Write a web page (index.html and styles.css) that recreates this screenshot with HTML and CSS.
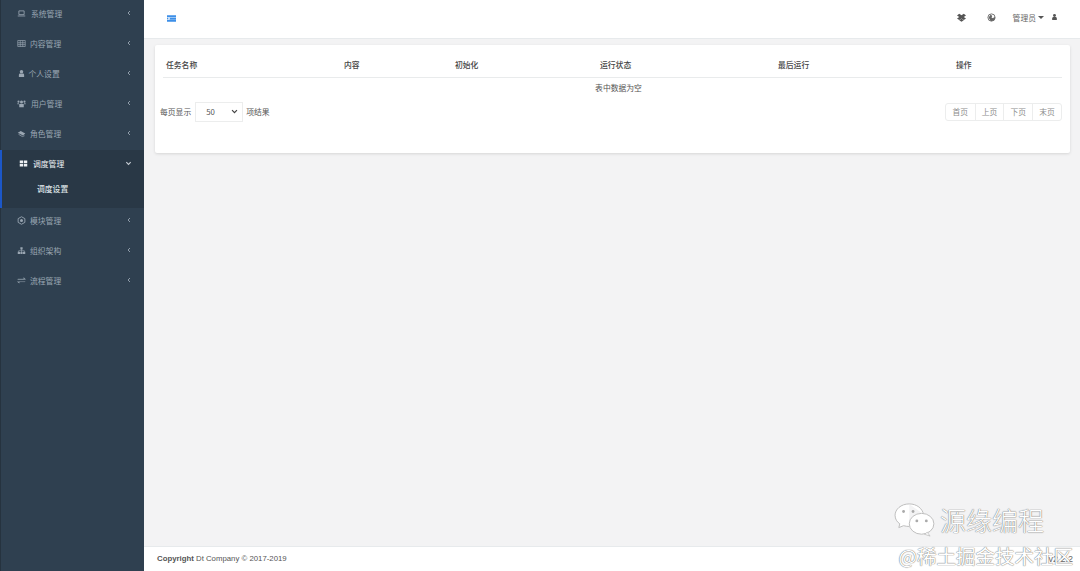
FILE: index.html
```html
<!DOCTYPE html>
<html lang="zh">
<head>
<meta charset="utf-8">
<title>调度设置</title>
<link rel="stylesheet" href="styles.css">
</head>
<body>
<div class="app">
  <aside class="sidebar">
    <nav class="menu">
      <a class="item"><svg class="ico" viewBox="0 0 12 12"><path d="M2.500 2.500h7v5h-7zM1 9.300h10" fill="none" stroke="currentColor" stroke-width="1.100"/></svg><span class="label">系统管理</span><svg class="chev" viewBox="0 0 4 6"><path d="M3 1L1 3l2 2" fill="none" stroke="currentColor"/></svg></a>
      <a class="item tight"><svg class="ico" viewBox="0 0 12 12"><path d="M1 2h10v8H1zM1 5h10M1 7.500h10M4.300 2v8M7.700 2v8" fill="none" stroke="currentColor" stroke-width=".9"/></svg><span class="label">内容管理</span><svg class="chev" viewBox="0 0 4 6"><path d="M3 1L1 3l2 2" fill="none" stroke="currentColor"/></svg></a>
      <a class="item person-item"><svg class="ico" viewBox="0 0 12 12"><circle cx="6" cy="3.500" r="2.300" fill="currentColor"/><path d="M2.500 10.500V8c0-1.500 1-2 2-2h3c1 0 2 .5 2 2v2.500z" fill="currentColor"/></svg><span class="label">个人设置</span><svg class="chev" viewBox="0 0 4 6"><path d="M3 1L1 3l2 2" fill="none" stroke="currentColor"/></svg></a>
      <a class="item"><svg class="ico" viewBox="0 0 12 12"><circle cx="6" cy="4" r="2" fill="currentColor"/><circle cx="2" cy="3.500" r="1.400" fill="currentColor"/><circle cx="10" cy="3.500" r="1.400" fill="currentColor"/><path d="M3 11V6.500h6V11zM.5 7V5.500h2V7zM9.500 7V5.500h2V7z" fill="currentColor"/></svg><span class="label">用户管理</span><svg class="chev" viewBox="0 0 4 6"><path d="M3 1L1 3l2 2" fill="none" stroke="currentColor"/></svg></a>
      <a class="item tight"><svg class="ico" viewBox="0 0 12 12"><path d="M1 5l4-2.500 6 3.500-3 2.500z" fill="currentColor"/><path d="M2 7l5 3 3-1" fill="none" stroke="currentColor"/></svg><span class="label">角色管理</span><svg class="chev" viewBox="0 0 4 6"><path d="M3 1L1 3l2 2" fill="none" stroke="currentColor"/></svg></a>
      <div class="group">
        <a class="item open"><svg class="ico" viewBox="0 0 12 12"><path d="M1 2h4.500v3.500H1zM6.500 2H11v3.500H6.500zM1 6.500h4.500V10H1zM6.500 6.500H11V10H6.500z" fill="currentColor"/></svg><span class="label">调度管理</span><svg class="down" viewBox="0 0 8 8"><path d="M1.500 2.500L4 5l2.500-2.500" fill="none" stroke="currentColor" stroke-width="1.300"/></svg></a>
        <a class="sub">调度设置</a>
      </div>
      <a class="item tight"><svg class="ico" viewBox="0 0 12 12"><path d="M6 1l4.500 2.500v5L6 11 1.500 8.500v-5z" fill="none" stroke="currentColor" stroke-width="1.200"/><circle cx="6" cy="6" r="2" fill="currentColor"/></svg><span class="label">模块管理</span><svg class="chev" viewBox="0 0 4 6"><path d="M3 1L1 3l2 2" fill="none" stroke="currentColor"/></svg></a>
      <a class="item tight"><svg class="ico" viewBox="0 0 12 12"><path d="M4.500 1.500h3v3h-3zM1 7.500h3v3H1zM4.500 7.500h3v3h-3zM8 7.500h3v3H8zM2 7.500V6h8v1.500h-.8v-.7H2.800v.7zM5.600 4.500h.8v3h-.8z" fill="currentColor"/></svg><span class="label">组织架构</span><svg class="chev" viewBox="0 0 4 6"><path d="M3 1L1 3l2 2" fill="none" stroke="currentColor"/></svg></a>
      <a class="item tight"><svg class="ico" viewBox="0 0 12 12"><path d="M1 4h8V2l2.500 2.500H1zM11 7.500H3v2L.5 7.500H11z" fill="currentColor" stroke="currentColor" stroke-width=".4"/></svg><span class="label">流程管理</span><svg class="chev" viewBox="0 0 4 6"><path d="M3 1L1 3l2 2" fill="none" stroke="currentColor"/></svg></a>
    </nav>
  </aside>
  <div class="main">
    <header class="topbar">
      <svg class="toggle" viewBox="0 0 10 7"><path d="M0 0h10v2H0zM3 2.600h7v1.900H3zM0 5h10v2H0z" fill="#3d8fe8"/><path d="M0 2.400l2 1.100-2 1.100z" fill="#3d8fe8"/></svg>
      <div class="tools">
        <svg class="tool" viewBox="0 0 12 12"><path d="M3 1l3 2 3-2 3 2.300-3 2 3 2-3 1.900-3-2-3 2-3-1.900 3-2-3-2z" fill="#555"/><path d="M3 9.500l3-1.800 3 1.800-3 2z" fill="#555"/></svg>
        <svg class="tool tool-gap" viewBox="0 0 12 12"><circle cx="6" cy="6" r="4.800" fill="none" stroke="#666" stroke-width="1.200"/><path d="M2 6l3-4 2 2-1 2 2 1 2-2 1 2-2 3-4 1-1-2z" fill="#666"/></svg>
        <span class="user">管理员</span><span class="caret"></span>
        <svg class="tool person" viewBox="0 0 12 12"><circle cx="6" cy="3.500" r="2.500" fill="#555"/><path d="M2 11V8.500c0-1.500 1-2.500 2.500-2.500h3C9 6 10 7 10 8.500V11z" fill="#555"/></svg>
      </div>
    </header>
    <main class="content">
      <section class="card">
        <div class="thead">
          <span>任务名称</span><span>内容</span><span>初始化</span><span>运行状态</span><span>最后运行</span><span>操作</span>
        </div>
        <div class="empty">表中数据为空</div>
        <div class="controls">
          <div class="length">
            <span>每页显示</span>
            <span class="select">50<svg class="sel-arrow" viewBox="0 0 8 8"><path d="M1.200 2.500L4 5.300l2.800-2.800" fill="none" stroke="#444" stroke-width="1.400"/></svg></span>
            <span>项结果</span>
          </div>
          <div class="pager">
            <a>首页</a><a>上页</a><a>下页</a><a>末页</a>
          </div>
        </div>
      </section>
    </main>
    <footer class="footer">
      <span><b>Copyright</b> Dt Company © 2017-2019</span>
      <span class="version">v2.2.2</span>
    </footer>
  </div>
</div>
<div class="watermark">
  <div class="wm-top">
    <svg class="wechat" viewBox="0 0 44 38"><path d="M17 2C8 2 2 8 2 14c0 4 2 7 5 9l-1 4 5-2c2 .6 4 .8 6 .8" fill="#fff" stroke="#bbb" stroke-width="1"/><path d="M17 2c8 0 14 5 15 11" fill="#fff" stroke="#bbb" stroke-width="1"/><ellipse cx="30" cy="23" rx="13" ry="11" fill="#fff" stroke="#bbb" stroke-width="1"/><path d="M36 32l3 4-6-2z" fill="#fff" stroke="#bbb" stroke-width=".8"/><circle cx="11" cy="10" r="1.500" fill="#aaa"/><circle cx="21" cy="10" r="1.500" fill="#aaa"/><circle cx="25" cy="20" r="1.500" fill="#aaa"/><circle cx="35" cy="20" r="1.500" fill="#aaa"/></svg>
    <span class="wm-title">源缘编程</span>
  </div>
  <div class="wm-sub">@稀土掘金技术社区</div>
</div>
</body>
</html>
```

FILE: styles.css
```css
* { box-sizing: border-box; }
html, body { margin: 0; height: 100%; overflow: hidden; }
body {
  font-family: "Noto Sans CJK SC", "Liberation Sans", sans-serif;
  font-size: 7.800px;
  color: #676a6c;
  background: #f3f3f4;
}
.app { display: flex; height: 571px; }
.sidebar {
  width: 144px;
  flex: none;
  background: #2f4050;
  border-left: 1px solid #26333f;
}
.menu { display: flex; flex-direction: column; margin-top: -2px; }
.item {
  height: 30px;
  display: flex;
  align-items: center;
  padding: 0 13px 0 16px;
  color: #9aa6b2;
}
.ico { width: 9px; height: 9px; flex: none; margin-right: 5px; }
.tight .ico { margin-right: 4px; }
.person-item .ico { margin-right: 2.500px; }
.label { flex: 1; }
.chev { width: 4px; height: 6px; color: #8e9ba8; }
.group {
  background: #293846;
  border-left: 2px solid #1c57c8;
  margin: 2px 0 -3px -1px;
  height: 58px;
}
.group .item { color: #eef1f4; padding: 0 12px 0 17px; height: 26px; }
.down { width: 7px; height: 7px; color: #c5ccd3; }
.sub { display: block; padding-left: 35px; margin-top: 3px; height: 20px; line-height: 20px; color: #dfe4e8; font-weight: 500; }
.main { flex: 1; display: flex; flex-direction: column; min-width: 0; }
.topbar {
  height: 39px;
  flex: none;
  background: #fff;
  border-bottom: 1px solid #e7eaec;
  display: flex;
  align-items: center;
  justify-content: space-between;
  padding: 0 22px 4px 23px;
}
.toggle { width: 9px; height: 7px; margin-top: 2px; }
.tools { display: flex; align-items: center; color: #666; }
.tool { width: 9px; height: 9px; }
.tool-gap { margin: 0 17px 0 21px; }
.caret {
  width: 0; height: 0; margin: 0 7px 0 2px;
  border-left: 3px solid transparent;
  border-right: 3px solid transparent;
  border-top: 3px solid #555;
}
.person { width: 7px; height: 8px; }
.content { flex: 1; padding: 6px 10px 0 11px; min-height: 0; }
.card {
  height: 108px;
  background: #fff;
  border-radius: 2px;
  box-shadow: 0 1px 3px rgba(0,0,0,.12);
  padding: 0 8px 0 5px;
}
.thead {
  display: grid;
  grid-template-columns: 178px 111px 145px 178px 178px 1fr;
  height: 33px;
  margin-left: 3px;
  padding: 7px 0 0 3px;
  align-items: center;
  border-bottom: 1px solid #e9ebec;
  color: #444;
  font-weight: 500;
}
.empty { text-align: center; height: 21px; line-height: 19px; color: #555; padding-left: 15px; }
.controls { display: flex; justify-content: space-between; align-items: center; height: 23px; padding-top: 2px; }
.length { display: flex; align-items: center; gap: 3px; color: #555; }
.select {
  width: 48px; height: 20px;
  margin-left: 1px;
  border: 1px solid #eceded;
  padding: 0 4px 0 10px;
  display: flex; align-items: center; justify-content: space-between;
  color: #555;
  background: #fff;
}
.sel-arrow { width: 7px; height: 7px; }
.pager { display: flex; border: 1px solid #eceded; border-radius: 3px; height: 18px; }
.pager a { width: 28.800px; text-align: center; line-height: 16px; color: #8c8c8c; border-left: 1px solid #eceded; }
.pager a:first-child { border-left: 0; }
.footer {
  height: 25px;
  flex: none;
  background: #fff;
  border-top: 1px solid #e7eaec;
  padding: 0 7px 1px 13px;
  display: flex;
  align-items: center;
  justify-content: space-between;
  font-family: "Liberation Sans", sans-serif;
  color: #555;
}
.version { font-size: 9px; color: #666; }
.watermark {
  position: absolute;
  right: 7px;
  bottom: 2px;
  width: 180px;
  color: #fff;
  text-shadow: 0 0 1px #777, 0 0 1px #777;
}
.wm-top { display: flex; align-items: center; gap: 5px; margin-bottom: 4px; }
.wechat { width: 42px; height: 36px; flex: none; }
.wm-title { font-size: 26px; line-height: 34px; font-weight: 300; white-space: nowrap; }
.wm-sub { font-size: 19.500px; line-height: 27px; white-space: nowrap; text-align: right; }
```
